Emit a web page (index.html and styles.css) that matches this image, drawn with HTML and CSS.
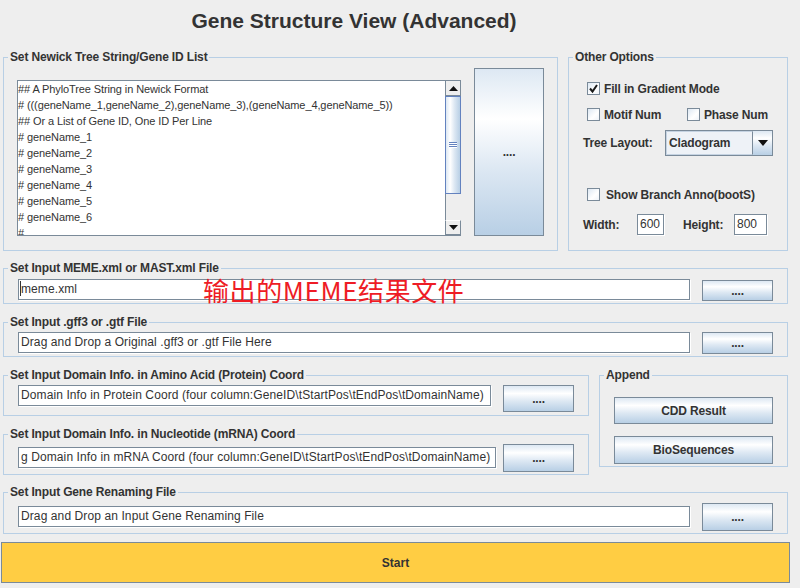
FILE: index.html
```html
<!DOCTYPE html>
<html>
<head>
<meta charset="utf-8">
<title>Gene Structure View (Advanced)</title>
<link rel="stylesheet" href="styles.css">
</head>
<body>
<div class="app">
  <h1 class="title">Gene Structure View (Advanced)</h1>

  <div class="top-row">
    <fieldset class="panel newick">
      <legend>Set Newick Tree String/Gene ID List</legend>
      <div class="newick-body">
        <div class="textarea">
          <div class="ta-text">
            <div>## A PhyloTree String in Newick Format</div>
            <div># (((geneName_1,geneName_2),geneName_3),(geneName_4,geneName_5))</div>
            <div>## Or a List of Gene ID, One ID Per Line</div>
            <div># geneName_1</div>
            <div># geneName_2</div>
            <div># geneName_3</div>
            <div># geneName_4</div>
            <div># geneName_5</div>
            <div># geneName_6</div>
            <div>#</div>
          </div>
          <div class="vscroll">
            <div class="sb-arrow"><svg width="9" height="5" viewBox="0 0 9 5"><polygon points="0,5 9,5 4.5,0" fill="#111"/></svg></div>
            <div class="sb-thumb"><span class="grip"></span></div>
            <div class="sb-track"></div>
            <div class="sb-arrow"><svg width="9" height="5" viewBox="0 0 9 5"><polygon points="0,0 9,0 4.5,5" fill="#111"/></svg></div>
          </div>
        </div>
        <button class="btn tall">....</button>
      </div>
    </fieldset>

    <fieldset class="panel options">
      <legend>Other Options</legend>
      <div class="opt-row r1">
        <span class="check"><svg width="11" height="11" viewBox="0 0 11 11"><path d="M2 5.5 L4.5 8.5 L9 2" fill="none" stroke="#1a1a1a" stroke-width="2"/></svg></span>
        <span class="opt-label">Fill in Gradient Mode</span>
      </div>
      <div class="opt-row r2">
        <span class="check-item motif"><span class="check"></span><span class="opt-label">Motif Num</span></span>
        <span class="check-item"><span class="check"></span><span class="opt-label">Phase Num</span></span>
      </div>
      <div class="opt-row r3">
        <span class="opt-label layout-label">Tree Layout:</span>
        <span class="combo">
          <span class="combo-text">Cladogram</span>
          <span class="combo-arrow"><svg width="10" height="6" viewBox="0 0 10 6"><polygon points="0,0 10,0 5,6" fill="#111"/></svg></span>
        </span>
      </div>
      <div class="opt-row r4">
        <span class="check"></span>
        <span class="opt-label gap5">Show Branch Anno(bootS)</span>
      </div>
      <div class="opt-row r5">
        <span class="opt-label w-label">Width:</span>
        <span class="small-input w-input">600</span>
        <span class="opt-label h-label">Height:</span>
        <span class="small-input h-input">800</span>
      </div>
    </fieldset>
  </div>

  <fieldset class="panel wide meme">
    <legend>Set Input MEME.xml or MAST.xml File</legend>
    <div class="file-row">
      <div class="field"><span class="caret"></span>meme.xml</div>
      <button class="btn small">....</button>
    </div>
    <span class="annotation">输出的MEME结果文件</span>
  </fieldset>

  <fieldset class="panel wide gff">
    <legend>Set Input .gff3 or .gtf File</legend>
    <div class="file-row">
      <div class="field">Drag and Drop a Original .gff3 or .gtf File Here</div>
      <button class="btn small">....</button>
    </div>
  </fieldset>

  <div class="mid-row">
    <div class="domain-col">
      <fieldset class="panel dom-prot">
        <legend>Set Input Domain Info. in Amino Acid (Protein) Coord</legend>
        <div class="file-row">
          <div class="field">Domain Info in Protein Coord (four column:GeneID\tStartPos\tEndPos\tDomainName)</div>
          <button class="btn mid">....</button>
        </div>
      </fieldset>
      <fieldset class="panel dom-mrna">
        <legend>Set Input Domain Info. in Nucleotide (mRNA) Coord</legend>
        <div class="file-row">
          <div class="field">g Domain Info in mRNA Coord (four column:GeneID\tStartPos\tEndPos\tDomainName)</div>
          <button class="btn mid">....</button>
        </div>
      </fieldset>
    </div>
    <fieldset class="panel append">
      <legend>Append</legend>
      <div class="append-body">
        <button class="btn wide-btn cdd">CDD Result</button>
        <button class="btn wide-btn bio">BioSequences</button>
      </div>
    </fieldset>
  </div>

  <fieldset class="panel wide rename">
    <legend>Set Input Gene Renaming File</legend>
    <div class="file-row">
      <div class="field">Drag and Drop an Input Gene Renaming File</div>
      <button class="btn mid">....</button>
    </div>
  </fieldset>

  <button class="start">Start</button>
</div>
</body>
</html>
```

FILE: styles.css
```css
html, body {
  margin: 0;
  padding: 0;
}

body {
  width: 800px;
  height: 588px;
  overflow: hidden;
  background: #eeeeee;
  font-family: "Liberation Sans", Arial, sans-serif;
  color: #333333;
}

.app {
  width: 785px;
  padding-left: 3px;
  display: flex;
  flex-direction: column;
}

.title {
  margin: 0 0 8px 0;
  height: 42px;
  line-height: 42px;
  width: 702px;
  text-align: center;
  font-size: 21px;
  font-weight: bold;
  color: #333333;
}

/* titled panels */
.panel {
  margin: 0;
  padding: 0;
  min-width: 0;
  border: 1px solid #b8cfe5;
  position: relative;
}

.panel legend {
  margin-left: 4px;
  padding: 0 2px;
  font-size: 12px;
  font-weight: bold;
  line-height: 14px;
  letter-spacing: -0.15px;
  color: #333333;
}

.top-row {
  display: flex;
  gap: 10px;
  height: 201px;
}

.newick {
  width: 555px;
  box-sizing: border-box;
}

.newick-body {
  display: flex;
  align-items: flex-start;
  padding: 0 13px 0 13px;
  gap: 13px;
}

.textarea {
  margin-top: 16px;
  width: 444px;
  height: 156px;
  box-sizing: border-box;
  border: 1px solid #7a8a99;
  border-right: none;
  background: #ffffff;
  display: flex;
  overflow: hidden;
}

.ta-text {
  flex: 1;
  overflow: hidden;
  font-size: 11px;
  line-height: 16px;
  letter-spacing: -0.1px;
  white-space: nowrap;
  color: #333333;
}

.vscroll {
  width: 16px;
  display: flex;
  flex-direction: column;
  background: #eeeeee;
  box-shadow: 1px 0 0 #ffffff;
}

.sb-arrow {
  height: 15px;
  box-sizing: border-box;
  border: 1px solid #7a8a99;
  border-top-color: #ffffff;
  background: #eeeeee;
  display: flex;
  align-items: center;
  justify-content: center;
}

.sb-arrow:first-child {
  border-top: none;
}

.sb-thumb {
  height: 98px;
  box-sizing: border-box;
  border: 1px solid #6382bf;
  background: linear-gradient(to right, #dde8f3 0%, #ffffff 30%, #dde8f3 60%, #b8cfe5 100%);
  display: flex;
  align-items: center;
  justify-content: center;
}

.grip {
  width: 8px;
  height: 6px;
  background: repeating-linear-gradient(to bottom, #6382bf 0, #6382bf 1px, #ffffff 1px, #ffffff 2px);
}

.sb-track {
  flex: 1;
  background: #eeeeee;
  border-left: 1px solid #7a8a99;
}

/* buttons */
.btn {
  font-family: "Liberation Sans", Arial, sans-serif;
  font-size: 12px;
  font-weight: bold;
  letter-spacing: -0.15px;
  color: #333333;
  border: 1px solid #7a8a99;
  background: linear-gradient(to bottom, #dde8f3 0%, #ffffff 30%, #dde8f3 60%, #b8cfe5 100%);
  padding: 0;
  margin: 0;
  box-sizing: border-box;
  flex: none;
}

.btn.tall {
  margin-top: 4px;
  width: 70px;
  height: 168px;
}

.btn.small {
  width: 71px;
  height: 22px;
}

.btn.mid {
  width: 71px;
  height: 28px;
}

/* options */
.options {
  width: 220px;
  box-sizing: border-box;
}

.opt-row {
  display: flex;
  align-items: center;
}

.r1 { margin-top: 16px; height: 17px; padding-left: 18px; }
.r2 { margin-top: 9px; height: 17px; padding-left: 18px; }
.r3 { margin-top: 7px; height: 26px; padding-left: 14px; }
.r4 { margin-top: 30px; height: 17px; padding-left: 18px; }
.r5 { margin-top: 11px; height: 21px; padding-left: 14px; }

.check-item {
  display: flex;
  align-items: center;
}

.check-item.motif {
  width: 100px;
}

.check {
  width: 13px;
  height: 13px;
  box-sizing: border-box;
  border: 1px solid #7a8a99;
  background: linear-gradient(to bottom right, #dde8f3 0%, #ffffff 60%, #eef3f9 100%);
  display: flex;
  align-items: center;
  justify-content: center;
  flex: none;
}

.opt-label {
  font-size: 12px;
  font-weight: bold;
  letter-spacing: -0.15px;
  color: #333333;
  margin-left: 4px;
  white-space: nowrap;
}

.opt-label.gap5 {
  margin-left: 6px;
}

.layout-label {
  margin-left: 0;
  width: 82px;
}

.combo {
  width: 108px;
  height: 26px;
  box-sizing: border-box;
  border: 1px solid #7a8a99;
  display: flex;
  background: #eef2f7;
}

.combo-text {
  flex: 1;
  font-size: 12px;
  font-weight: bold;
  letter-spacing: -0.15px;
  line-height: 22px;
  padding-left: 2px;
  border: 1px solid #c5d3e2;
  border-right: 1px solid #7a8a99;
  color: #333333;
}

.combo-arrow {
  width: 19px;
  display: flex;
  align-items: center;
  justify-content: center;
  background: linear-gradient(to bottom, #dde8f3 0%, #ffffff 30%, #dde8f3 60%, #b8cfe5 100%);
}

.w-label { margin-left: 0; width: 54px; }
.h-label { margin-left: 19px; width: 51px; }

.small-input {
  height: 21px;
  box-sizing: border-box;
  border: 1px solid #7a8a99;
  box-shadow: 1px 1px 0 #ffffff;
  background: #ffffff;
  font-size: 12px;
  line-height: 19px;
  padding-left: 2px;
  color: #333333;
}

.w-input { width: 27px; }
.h-input { width: 33px; }

/* file rows */
.wide {
  width: 785px;
  box-sizing: border-box;
}

.file-row {
  display: flex;
  align-items: flex-start;
  gap: 12px;
  padding: 0 14px 2px 14px;
}

.field {
  flex: 1;
  min-width: 0;
  height: 21px;
  box-sizing: border-box;
  border: 1px solid #7a8a99;
  box-shadow: 1px 1px 0 #ffffff;
  background: #ffffff;
  font-size: 12px;
  line-height: 19px;
  letter-spacing: 0.1px;
  padding-left: 2px;
  white-space: nowrap;
  overflow: hidden;
  color: #333333;
}

.caret {
  display: inline-block;
  width: 1px;
  height: 15px;
  background: #333333;
  vertical-align: -3px;
  margin-left: -1px;
}

.meme {
  margin-top: 10px;
}

.meme .field { margin-top: 4px; }
.meme .btn { margin-top: 5px; height: 21px; }

.annotation {
  position: absolute;
  left: 199px;
  top: 0px;
  font-family: "Noto Sans CJK SC", "Liberation Sans", sans-serif;
  font-size: 26px;
  line-height: 30px;
  letter-spacing: 0.6px;
  color: #ee1c25;
  white-space: nowrap;
}

.gff {
  margin-top: 11px;
}

.gff .field { margin-top: 3px; }
.gff .btn { margin-top: 3px; }

.mid-row {
  margin-top: 11px;
  display: flex;
  gap: 10px;
  align-items: flex-start;
}

.domain-col {
  width: 586px;
  display: flex;
  flex-direction: column;
  gap: 11px;
}

.dom-prot .file-row { padding-bottom: 3px; }
.dom-prot .field { margin-top: 3px; }
.dom-prot .btn { margin-top: 3px; height: 27px; }

.dom-mrna .file-row { gap: 7px; }
.dom-mrna .field { margin-top: 6px; }
.dom-mrna .btn { margin-top: 3px; }

.append {
  width: 189px;
  box-sizing: border-box;
}

.append-body {
  display: flex;
  flex-direction: column;
  padding: 15px 14px 2px 14px;
  gap: 12px;
}

.wide-btn {
  width: 159px;
}

.cdd { height: 27px; }
.bio { height: 28px; }

.rename {
  margin-top: 10px;
}

.rename .field { margin-top: 7px; }
.rename .btn { margin-top: 4px; }

.start {
  margin: 8px 0 0 -2px;
  width: 789px;
  height: 41px;
  box-sizing: border-box;
  border: 1px solid #7a8a99;
  background: #ffcd43;
  font-family: "Liberation Sans", Arial, sans-serif;
  font-size: 12px;
  font-weight: bold;
  color: #333333;
  padding: 0;
}
```
